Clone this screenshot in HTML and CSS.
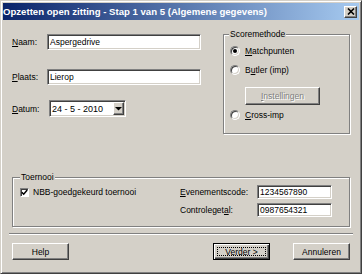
FILE: index.html
```html
<!DOCTYPE html>
<html>
<head>
<meta charset="utf-8">
<link rel="stylesheet" href="styles.css">
</head>
<body>
<div class="window">
  <div class="titlebar">
    <span class="title">Opzetten open zitting - Stap 1 van 5 (Algemene gegevens)</span>
    <span class="close"><svg width="8" height="7" viewBox="0 0 8 7"><path d="M1 0.5 L7 6.5 M7 0.5 L1 6.5" stroke="#000" stroke-width="1.6" fill="none"/></svg></span>
  </div>
  <div class="client">
    <div class="upper">
      <div class="fields">
        <div class="field"><span class="lbl"><u>N</u>aam:</span><div class="input wide">Aspergedrive</div></div>
        <div class="field"><span class="lbl"><u>P</u>laats:</span><div class="input wide">Lierop</div></div>
        <div class="field date"><span class="lbl"><u>D</u>atum:</span>
          <div class="combo"><span class="dateval">24 - 5 - 2010</span><span class="dropbtn"><svg width="7" height="4" viewBox="0 0 7 4"><polygon points="0,0 7,0 3.5,3.5" fill="#000"/></svg></span></div>
        </div>
      </div>
      <fieldset class="group score">
        <legend>Scoremethode</legend>
        <div class="radio-row"><span class="radio checked"></span><span><u>M</u>atchpunten</span></div>
        <div class="radio-row r2"><span class="radio"></span><span>B<u>u</u>tler (imp)</span></div>
        <div class="btn disabled settings"><span><u>I</u>nstellingen</span></div>
        <div class="radio-row r3"><span class="radio"></span><span><u>C</u>ross-imp</span></div>
      </fieldset>
    </div>
    <fieldset class="group tourn">
      <legend>Toernooi</legend>
      <div class="tgrid">
        <div class="check-row"><span class="checkbox"><svg width="7" height="7" viewBox="0 0 7 7"><path d="M0.8 3.2 L2.7 5.2 L6.2 1" stroke="#000" stroke-width="1.5" fill="none"/></svg></span><span>NBB-<u>g</u>oedgekeurd toernooi</span></div>
        <span class="lbl2"><u>E</u>venementscode:</span>
        <div class="input code">1234567890</div>
        <span></span>
        <span class="lbl2">Controleget<u>a</u>l:</span>
        <div class="input code">0987654321</div>
      </div>
    </fieldset>
    <div class="sep"></div>
    <div class="buttons">
      <div class="btn">Help</div>
      <div class="btn default">Verder &gt;</div>
      <div class="btn cancel">Annuleren</div>
    </div>
  </div>
</div>
</body>
</html>
```

FILE: styles.css
```css
html, body {
  margin: 0;
  padding: 0;
  background: #D4D0C8;
}
body {
  font-family: "Liberation Sans", Arial, sans-serif;
  font-size: 8.5px;
  color: #000;
}
.window {
  width: 362px;
  height: 274px;
  box-sizing: border-box;
  border: 1px solid;
  border-color: #D4D0C8 #404040 #404040 #D4D0C8;
  box-shadow: inset 1px 1px 0 #fff, inset -1px -1px 0 #808080;
  padding: 2px;
  background: #D4D0C8;
  display: flex;
  flex-direction: column;
}
.titlebar {
  height: 17px;
  flex: none;
  background: linear-gradient(to right, #0A246A, #A6CAF0);
  display: flex;
  align-items: center;
  justify-content: space-between;
  padding: 0 2px 0 0;
}
.title {
  color: #fff;
  font-weight: bold;
  font-size: 9.6px;
  white-space: nowrap;
}
.close {
  box-sizing: border-box;
  width: 13px;
  height: 12px;
  background: #D4D0C8;
  border: 1px solid;
  border-color: #fff #404040 #404040 #fff;
  box-shadow: inset -1px -1px 0 #808080;
  display: flex;
  align-items: center;
  justify-content: center;
}
.close svg { display: block; }
.client {
  flex: 1;
  padding: 0 9px;
  display: flex;
  flex-direction: column;
}
.upper {
  display: flex;
  justify-content: space-between;
  align-items: flex-start;
  padding-top: 8px;
}
.fields {
  width: 189px;
  padding-top: 6px;
  display: flex;
  flex-direction: column;
}
.field {
  display: flex;
  align-items: center;
  height: 16px;
}
.field + .field { margin-top: 19px; }
.field.date { margin-top: 15px; height: 17px; }
.lbl {
  width: 35px;
  flex: none;
  white-space: nowrap;
}
.input {
  box-sizing: border-box;
  background: #fff;
  border: 1px solid;
  border-color: #808080 #fff #fff #808080;
  box-shadow: inset 1px 1px 0 #404040, inset -1px -1px 0 #D4D0C8;
  padding-left: 2px;
  display: flex;
  align-items: center;
  white-space: nowrap;
}
.input.wide {
  flex: 1;
  height: 16px;
}
.input.code {
  width: 75px;
  height: 14px;
}
.combo {
  box-sizing: border-box;
  width: 77px;
  height: 17px;
  margin-left: 2px;
  background: #fff;
  border: 1px solid;
  border-color: #808080 #fff #fff #808080;
  box-shadow: inset 1px 1px 0 #404040, inset -1px -1px 0 #D4D0C8;
  padding: 0 1px 0 2px;
  display: flex;
  align-items: center;
  justify-content: space-between;
}
.dateval {
  font-size: 9px;
  white-space: pre;
}
.dropbtn {
  box-sizing: border-box;
  width: 11px;
  height: 13px;
  background: #D4D0C8;
  border: 1px solid;
  border-color: #fff #404040 #404040 #fff;
  box-shadow: inset -1px -1px 0 #808080;
  display: flex;
  align-items: center;
  justify-content: center;
}
.dropbtn svg { display: block; }
.group {
  margin: 0;
  min-width: 0;
  box-sizing: border-box;
  border: 1px solid #808080;
  box-shadow: 1px 1px 0 #fff, inset 1px 1px 0 #fff;
}
.group legend {
  padding: 0 1px;
  line-height: 12px;
  background: #D4D0C8;
}
.score {
  width: 127px;
  padding: 5px 0 12px 6px;
}
.score legend { margin-left: -1px; }
.radio-row {
  display: flex;
  align-items: center;
  gap: 5px;
  height: 12px;
  white-space: nowrap;
}
.radio-row.r2 { margin-top: 7px; }
.radio-row.r3 { margin-top: 4px; }
.radio {
  box-sizing: border-box;
  width: 10px;
  height: 10px;
  flex: none;
  border-radius: 50%;
  border: 1px solid;
  border-color: #808080 #fff #fff #808080;
  box-shadow: inset 1px 1px 0 #404040, inset -1px -1px 0 #D4D0C8;
  background: #fff;
  display: flex;
  align-items: center;
  justify-content: center;
}
.radio.checked::after {
  content: "";
  width: 4px;
  height: 4px;
  border-radius: 50%;
  background: #000;
}
.btn {
  box-sizing: border-box;
  width: 57px;
  height: 17px;
  background: #D4D0C8;
  border: 1px solid;
  border-color: #fff #404040 #404040 #fff;
  box-shadow: inset -1px -1px 0 #808080;
  display: flex;
  align-items: center;
  justify-content: center;
  white-space: nowrap;
  position: relative;
}
.btn.settings {
  width: 75px;
  height: 18px;
  margin: 11px 0 0 15px;
}
.btn.disabled {
  color: #808080;
  text-shadow: 1px 1px 0 #fff;
}
.tourn {
  margin-top: 37px;
  padding: 2px 0 9px 7px;
}
.tgrid {
  display: grid;
  grid-template-columns: 160px 77px 75px;
  grid-template-rows: 14px 14px;
  row-gap: 4px;
  align-items: center;
}
.check-row {
  display: flex;
  align-items: center;
  gap: 4px;
  white-space: nowrap;
}
.checkbox {
  box-sizing: border-box;
  width: 9px;
  height: 9px;
  flex: none;
  background: #fff;
  border: 1px solid;
  border-color: #808080 #fff #fff #808080;
  box-shadow: inset 1px 1px 0 #404040;
  display: flex;
  align-items: center;
  justify-content: center;
}
.checkbox svg { display: block; }
.lbl2 { white-space: nowrap; }
.sep {
  height: 0;
  margin: 6px -3px 0;
  border-top: 1px solid #808080;
  border-bottom: 1px solid #fff;
}
.buttons {
  display: flex;
  margin-top: 8px;
}
.btn.default {
  margin-left: auto;
  border: 1px solid #000;
  box-shadow: inset 1px 1px 0 #fff, inset -1px -1px 0 #404040, inset -2px -2px 0 #808080;
}
.btn.default::after {
  content: "";
  position: absolute;
  left: 3px;
  top: 3px;
  right: 3px;
  bottom: 3px;
  border: 1px dotted #000;
}
.btn.cancel { margin-left: 23px; }
```
